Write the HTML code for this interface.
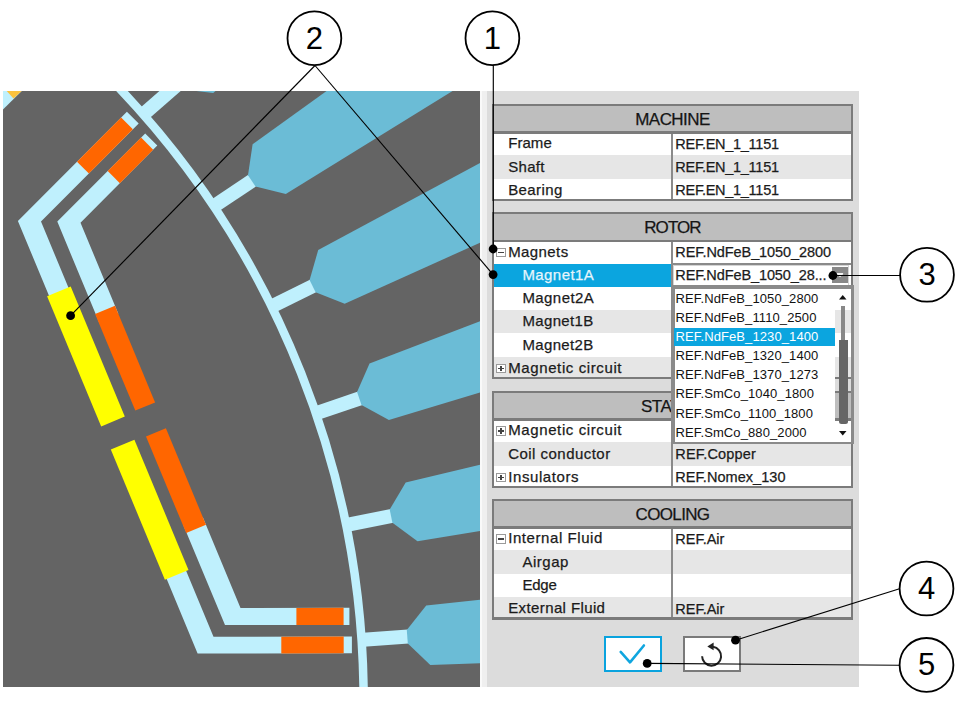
<!DOCTYPE html><html><head><meta charset="utf-8"><style>*{margin:0;padding:0}
html,body{width:966px;height:711px;overflow:hidden;background:#fff;font-family:"Liberation Sans",sans-serif}
svg{position:absolute;left:0;top:0}
.a{position:absolute}
.t{white-space:nowrap;-webkit-text-stroke:0.25px currentColor}
</style></head><body><svg class="motor" width="966" height="711" viewBox="0 0 966 711"><defs><clipPath id="mc"><rect x="3" y="91" width="477" height="596"/></clipPath></defs><g clip-path="url(#mc)"><rect x="3" y="91" width="477" height="596" fill="#646464"/><polygon fill="#bff0fd" points="360.8,748.4 409.2,751.4 408.3,765.4 359.9,762.4"/><polygon fill="#6bbcd6" points="408.2,751.5 430.5,729.8 973.2,743.8 967.2,841.9 426.9,789.5 407.3,765.1"/><polygon fill="#bff0fd" points="359.4,632.9 407.8,629.6 408.8,643.6 360.4,646.9"/><polygon fill="#6bbcd6" points="406.8,629.9 426.2,605.4 966.1,548.9 972.8,647.0 430.3,665.0 407.8,643.4"/><polygon fill="#bff0fd" points="343.1,518.6 390.7,509.0 393.4,522.7 345.9,532.3"/><polygon fill="#6bbcd6" points="389.7,509.4 405.7,482.6 933.8,356.6 953.2,453.0 417.5,541.2 392.4,522.7"/><polygon fill="#bff0fd" points="312.1,407.3 358.0,391.6 362.5,404.9 316.6,420.5"/><polygon fill="#6bbcd6" points="357.1,392.1 369.5,363.5 876.8,170.1 908.5,263.1 388.9,420.1 361.5,405.0"/><polygon fill="#bff0fd" points="266.9,301.0 310.4,279.5 316.6,292.0 273.1,313.5"/><polygon fill="#6bbcd6" points="309.6,280.1 318.2,250.1 796.1,-7.4 839.6,80.7 344.7,303.7 315.6,292.3"/><polygon fill="#bff0fd" points="208.4,201.4 248.7,174.5 256.5,186.1 216.2,213.0"/><polygon fill="#6bbcd6" points="248.0,175.2 252.6,144.3 693.0,-173.0 747.7,-91.3 285.8,194.0 255.5,186.5"/><polygon fill="#bff0fd" points="137.4,110.3 173.9,78.3 183.1,88.9 146.6,120.8"/><polygon fill="#6bbcd6" points="173.3,79.1 173.9,47.9 569.4,-323.8 634.2,-249.8 213.2,92.9 182.2,89.4"/><polygon fill="#bff0fd" points="55.2,29.1 87.2,-7.3 97.7,2.0 65.7,38.4"/><polygon fill="#6bbcd6" points="86.7,-6.4 83.3,-37.4 427.3,-457.3 501.1,-392.4 128.1,2.1 96.9,2.6"/><circle cx="-527.0" cy="701.0" r="890.65" fill="none" stroke="#bff0fd" stroke-width="8.5"/><polygon fill="#bff0fd" points="161.5,566.5 197.6,653.5 351.9,653.3 351.9,636.6 213.5,636.8 181.0,558.4"/><polygon fill="#ffff00" points="164.9,579.7 110.8,449.5 134.4,439.7 188.5,569.9"/><polygon fill="#ff6600" points="281.3,653.4 343.7,653.3 343.7,636.6 281.3,636.7"/><polygon fill="#bff0fd" points="183.3,524.9 225.0,625.1 349.4,625.0 349.4,607.8 240.5,607.9 202.7,516.9"/><polygon fill="#ff6600" points="186.2,533.1 146.0,436.5 165.9,428.2 206.0,524.8"/><polygon fill="#ff6600" points="296.4,625.1 343.6,625.0 343.6,607.8 296.4,607.9"/><polygon fill="#bff0fd" points="54.1,307.9 17.9,221.0 126.9,111.7 138.7,123.5 41.0,221.5 73.5,299.8"/><polygon fill="#ffff00" points="47.1,296.2 101.2,426.4 124.8,416.6 70.7,286.4"/><polygon fill="#ff6600" points="77.0,161.7 121.1,117.5 132.9,129.3 88.9,173.5"/><polygon fill="#bff0fd" points="98.9,321.8 57.3,221.6 145.2,133.5 157.3,145.6 80.5,222.7 118.3,313.7"/><polygon fill="#ff6600" points="95.1,314.0 135.3,410.6 155.1,402.4 115.0,305.8"/><polygon fill="#ff6600" points="107.7,171.0 141.1,137.6 153.2,149.7 119.9,183.2"/><polygon fill="#bff0fd" points="3.0,91.0 21.7,91.0 3.0,109.4"/><polygon fill="#fcc23c" points="6.7,91.0 21.7,91.0 13.5,98.6"/></g></svg><div class="a" style="left:480.00px;top:91.00px;width:2.00px;height:596.00px;background:#f9f9f9;"></div><div class="a" style="left:482.00px;top:91.00px;width:5.00px;height:596.00px;background:#efefef;"></div><div class="a" style="left:487.00px;top:91.00px;width:372.00px;height:596.00px;background:#dcdcdc;"></div><div class="a" style="left:492.00px;top:104.00px;width:361.00px;height:97.30px;background:#7b7b7b;"></div><div class="a" style="left:494.00px;top:106.20px;width:357.00px;height:25.20px;background:#bebebe;"></div><div class="a" style="left:494.00px;top:133.60px;width:357.00px;height:21.40px;background:#ffffff;"></div><div class="a t" style="left:508.20px;top:134.33px;font-size:15.0px;line-height:18.75px;letter-spacing:0.05px;color:#1b1b1b;">Frame</div><div class="a t" style="left:675.30px;top:134.82px;font-size:14.5px;line-height:18.12px;letter-spacing:-0.27px;color:#1b1b1b;">REF.EN_1_1151</div><div class="a" style="left:494.00px;top:155.00px;width:357.00px;height:24.00px;background:#e6e6e6;"></div><div class="a t" style="left:508.20px;top:157.63px;font-size:15.0px;line-height:18.75px;letter-spacing:0.31px;color:#1b1b1b;">Shaft</div><div class="a t" style="left:675.30px;top:158.12px;font-size:14.5px;line-height:18.12px;letter-spacing:-0.27px;color:#1b1b1b;">REF.EN_1_1151</div><div class="a" style="left:494.00px;top:179.00px;width:357.00px;height:20.00px;background:#ffffff;"></div><div class="a t" style="left:508.20px;top:180.93px;font-size:15.0px;line-height:18.75px;letter-spacing:0.40px;color:#1b1b1b;">Bearing</div><div class="a t" style="left:675.30px;top:181.42px;font-size:14.5px;line-height:18.12px;letter-spacing:-0.27px;color:#1b1b1b;">REF.EN_1_1151</div><div class="a t" style="left:572.50px;width:200px;text-align:center;top:109.28px;font-size:17.0px;line-height:21.25px;letter-spacing:-0.56px;color:#151515">MACHINE</div><div class="a" style="left:671.00px;top:133.60px;width:1.60px;height:65.40px;background:#8a8a8a;"></div><div class="a" style="left:492.00px;top:212.20px;width:361.00px;height:167.20px;background:#7b7b7b;"></div><div class="a" style="left:494.00px;top:214.40px;width:357.00px;height:25.20px;background:#bebebe;"></div><div class="a" style="left:494.00px;top:241.80px;width:357.00px;height:22.20px;background:#ffffff;"></div><div class="a t" style="left:508.20px;top:242.53px;font-size:15.0px;line-height:18.75px;letter-spacing:0.41px;color:#1b1b1b;">Magnets</div><div class="a" style="left:496.40px;top:247.60px;width:9.30px;height:9.30px;background:#fff;border:1px solid #9a9a9a;box-sizing:border-box"></div><div class="a" style="left:498.40px;top:251.60px;width:5.30px;height:1.30px;background:#444;"></div><div class="a t" style="left:675.30px;top:243.02px;font-size:14.5px;line-height:18.12px;letter-spacing:-0.08px;color:#1b1b1b;">REF.NdFeB_1050_2800</div><div class="a" style="left:494.00px;top:264.00px;width:357.00px;height:23.00px;background:#0ba5df;"></div><div class="a t" style="left:522.40px;top:265.83px;font-size:15.0px;line-height:18.75px;letter-spacing:0.43px;color:#e6f5fc;">Magnet1A</div><div class="a" style="left:494.00px;top:287.00px;width:357.00px;height:23.00px;background:#ffffff;"></div><div class="a t" style="left:522.40px;top:289.13px;font-size:15.0px;line-height:18.75px;letter-spacing:0.43px;color:#1b1b1b;">Magnet2A</div><div class="a" style="left:494.00px;top:310.00px;width:357.00px;height:23.00px;background:#e6e6e6;"></div><div class="a t" style="left:522.40px;top:312.43px;font-size:15.0px;line-height:18.75px;letter-spacing:0.36px;color:#1b1b1b;">Magnet1B</div><div class="a" style="left:494.00px;top:333.00px;width:357.00px;height:24.00px;background:#ffffff;"></div><div class="a t" style="left:522.40px;top:335.73px;font-size:15.0px;line-height:18.75px;letter-spacing:0.36px;color:#1b1b1b;">Magnet2B</div><div class="a" style="left:494.00px;top:357.00px;width:357.00px;height:20.10px;background:#e6e6e6;"></div><div class="a t" style="left:508.20px;top:359.03px;font-size:15.0px;line-height:18.75px;letter-spacing:0.61px;color:#1b1b1b;">Magnetic circuit</div><div class="a" style="left:496.40px;top:364.10px;width:9.30px;height:9.30px;background:#fff;border:1px solid #9a9a9a;box-sizing:border-box"></div><div class="a" style="left:498.40px;top:368.10px;width:5.30px;height:1.30px;background:#444;"></div><div class="a" style="left:500.40px;top:366.10px;width:1.30px;height:5.30px;background:#444;"></div><div class="a t" style="left:572.50px;width:200px;text-align:center;top:217.48px;font-size:17.0px;line-height:21.25px;letter-spacing:-0.92px;color:#151515">ROTOR</div><div class="a" style="left:671.00px;top:241.80px;width:1.60px;height:135.30px;background:#8a8a8a;"></div><div class="a" style="left:492.00px;top:391.00px;width:361.00px;height:97.30px;background:#7b7b7b;"></div><div class="a" style="left:494.00px;top:393.20px;width:357.00px;height:25.20px;background:#bebebe;"></div><div class="a" style="left:494.00px;top:420.60px;width:357.00px;height:21.40px;background:#ffffff;"></div><div class="a t" style="left:508.20px;top:421.33px;font-size:15.0px;line-height:18.75px;letter-spacing:0.61px;color:#1b1b1b;">Magnetic circuit</div><div class="a" style="left:496.40px;top:426.40px;width:9.30px;height:9.30px;background:#fff;border:1px solid #9a9a9a;box-sizing:border-box"></div><div class="a" style="left:498.40px;top:430.40px;width:5.30px;height:1.30px;background:#444;"></div><div class="a" style="left:500.40px;top:428.40px;width:1.30px;height:5.30px;background:#444;"></div><div class="a" style="left:494.00px;top:442.00px;width:357.00px;height:24.00px;background:#e6e6e6;"></div><div class="a t" style="left:508.20px;top:444.63px;font-size:15.0px;line-height:18.75px;letter-spacing:0.47px;color:#1b1b1b;">Coil conductor</div><div class="a t" style="left:675.30px;top:445.12px;font-size:14.5px;line-height:18.12px;letter-spacing:0.18px;color:#1b1b1b;">REF.Copper</div><div class="a" style="left:494.00px;top:466.00px;width:357.00px;height:20.00px;background:#ffffff;"></div><div class="a t" style="left:508.20px;top:467.93px;font-size:15.0px;line-height:18.75px;letter-spacing:0.59px;color:#1b1b1b;">Insulators</div><div class="a" style="left:496.40px;top:473.00px;width:9.30px;height:9.30px;background:#fff;border:1px solid #9a9a9a;box-sizing:border-box"></div><div class="a" style="left:498.40px;top:477.00px;width:5.30px;height:1.30px;background:#444;"></div><div class="a" style="left:500.40px;top:475.00px;width:1.30px;height:5.30px;background:#444;"></div><div class="a t" style="left:675.30px;top:468.42px;font-size:14.5px;line-height:18.12px;letter-spacing:0.05px;color:#1b1b1b;">REF.Nomex_130</div><div class="a t" style="left:572.50px;width:200px;text-align:center;top:396.28px;font-size:17.0px;line-height:21.25px;letter-spacing:-0.49px;color:#151515">STATOR</div><div class="a" style="left:671.00px;top:420.60px;width:1.60px;height:65.40px;background:#8a8a8a;"></div><div class="a" style="left:492.00px;top:499.00px;width:361.00px;height:120.60px;background:#7b7b7b;"></div><div class="a" style="left:494.00px;top:501.20px;width:357.00px;height:25.20px;background:#bebebe;"></div><div class="a" style="left:494.00px;top:528.60px;width:357.00px;height:21.40px;background:#ffffff;"></div><div class="a t" style="left:508.20px;top:529.33px;font-size:15.0px;line-height:18.75px;letter-spacing:0.57px;color:#1b1b1b;">Internal Fluid</div><div class="a" style="left:496.40px;top:534.40px;width:9.30px;height:9.30px;background:#fff;border:1px solid #9a9a9a;box-sizing:border-box"></div><div class="a" style="left:498.40px;top:538.40px;width:5.30px;height:1.30px;background:#444;"></div><div class="a t" style="left:675.30px;top:529.82px;font-size:14.5px;line-height:18.12px;letter-spacing:-0.01px;color:#1b1b1b;">REF.Air</div><div class="a" style="left:494.00px;top:550.00px;width:357.00px;height:24.00px;background:#e6e6e6;"></div><div class="a t" style="left:522.40px;top:552.63px;font-size:15.0px;line-height:18.75px;letter-spacing:0.54px;color:#1b1b1b;">Airgap</div><div class="a" style="left:494.00px;top:574.00px;width:357.00px;height:23.00px;background:#ffffff;"></div><div class="a t" style="left:522.40px;top:575.93px;font-size:15.0px;line-height:18.75px;letter-spacing:-0.21px;color:#1b1b1b;">Edge</div><div class="a" style="left:494.00px;top:597.00px;width:357.00px;height:20.30px;background:#e6e6e6;"></div><div class="a t" style="left:508.20px;top:599.23px;font-size:15.0px;line-height:18.75px;letter-spacing:0.39px;color:#1b1b1b;">External Fluid</div><div class="a t" style="left:675.30px;top:599.72px;font-size:14.5px;line-height:18.12px;letter-spacing:-0.01px;color:#1b1b1b;">REF.Air</div><div class="a t" style="left:572.50px;width:200px;text-align:center;top:504.28px;font-size:17.0px;line-height:21.25px;letter-spacing:-0.64px;color:#151515">COOLING</div><div class="a" style="left:671.00px;top:528.60px;width:1.60px;height:88.70px;background:#8a8a8a;"></div><div class="a" style="left:672.70px;top:262.20px;width:178.50px;height:24.20px;background:#ffffff;"></div><div class="a" style="left:672.70px;top:263.10px;width:176.80px;height:21.50px;background:#d4d4d4;"></div><div class="a" style="left:674.30px;top:265.90px;width:173.80px;height:18.70px;background:#ffffff;"></div><div class="a" style="left:672.70px;top:263.10px;width:178.50px;height:1.90px;background:#8a8a8a;"></div><div class="a t" style="left:675.30px;top:266.42px;font-size:14.5px;line-height:18.12px;letter-spacing:-0.10px;color:#1b1b1b;">REF.NdFeB_1050_28...</div><div class="a" style="left:832.10px;top:267.00px;width:16.00px;height:15.80px;background:#888888;"></div><div class="a" style="left:674.60px;top:288.50px;width:160.20px;height:153.20px;background:#ffffff;"></div><div class="a" style="left:671.30px;top:285.30px;width:182.70px;height:3.50px;background:#8a8a8a;"></div><div class="a" style="left:671.30px;top:441.60px;width:182.70px;height:2.30px;background:#8a8a8a;"></div><div class="a" style="left:671.30px;top:285.30px;width:3.30px;height:158.60px;background:#8a8a8a;"></div><div class="a" style="left:851.00px;top:285.30px;width:3.00px;height:158.60px;background:#8a8a8a;"></div><div class="a" style="left:674.30px;top:327.80px;width:160.50px;height:18.40px;background:#0ba5df;"></div><div class="a t" style="left:675.60px;top:290.77px;font-size:13.0px;line-height:16.25px;letter-spacing:0.10px;color:#111111;-webkit-text-stroke:0">REF.NdFeB_1050_2800</div><div class="a t" style="left:675.60px;top:309.90px;font-size:13.0px;line-height:16.25px;letter-spacing:0.10px;color:#111111;-webkit-text-stroke:0">REF.NdFeB_1110_2500</div><div class="a t" style="left:675.60px;top:329.03px;font-size:13.0px;line-height:16.25px;letter-spacing:0.10px;color:#ffffff;-webkit-text-stroke:0">REF.NdFeB_1230_1400</div><div class="a t" style="left:675.60px;top:348.16px;font-size:13.0px;line-height:16.25px;letter-spacing:0.10px;color:#111111;-webkit-text-stroke:0">REF.NdFeB_1320_1400</div><div class="a t" style="left:675.60px;top:367.29px;font-size:13.0px;line-height:16.25px;letter-spacing:0.10px;color:#111111;-webkit-text-stroke:0">REF.NdFeB_1370_1273</div><div class="a t" style="left:675.60px;top:386.42px;font-size:13.0px;line-height:16.25px;letter-spacing:0.10px;color:#111111;-webkit-text-stroke:0">REF.SmCo_1040_1800</div><div class="a t" style="left:675.60px;top:405.55px;font-size:13.0px;line-height:16.25px;letter-spacing:0.10px;color:#111111;-webkit-text-stroke:0">REF.SmCo_1100_1800</div><div class="a t" style="left:675.60px;top:424.68px;font-size:13.0px;line-height:16.25px;letter-spacing:0.10px;color:#111111;-webkit-text-stroke:0">REF.SmCo_880_2000</div><div class="a" style="left:841.20px;top:305.70px;width:4.20px;height:34.50px;background:#888888;"></div><div class="a" style="left:838.90px;top:339.70px;width:8.80px;height:84.60px;background:#666666;border-radius:0 0 2.5px 2.5px"></div><div class="a" style="left:603.50px;top:636.10px;width:58.60px;height:35.90px;background:#ffffff;border:2px solid #0aa3de;box-sizing:border-box"></div><div class="a" style="left:682.80px;top:636.10px;width:58.30px;height:35.90px;background:#ffffff;border:2px solid #7a7a7a;box-sizing:border-box"></div><svg width="966" height="711" viewBox="0 0 966 711" style="position:absolute;left:0;top:0"><polygon points="836.9,272.9 843.1,272.9 843.1,274.2 840,277.2 836.9,274.2" fill="#f4f4f4"/><polygon points="839,299.6 846.5,299.6 842.75,295" fill="#111"/><polygon points="839,431 846.5,431 842.75,435.5" fill="#111"/><polyline points="620.7,651.9 630,662.3 643.9,645.5" fill="none" stroke="#10a6df" stroke-width="2.6" stroke-linecap="round" stroke-linejoin="round"/><path d="M 702.1,656.3 A 9.5,9.5 0 1 0 713,646.8" fill="none" stroke="#222" stroke-width="2"/><polygon points="707.3,646.6 713.6,642.6 713.6,650.2" fill="#222"/><line x1="315.0" y1="65.5" x2="70.6" y2="315.7" stroke="#000" stroke-width="1.15"/><line x1="315.0" y1="65.5" x2="493.1" y2="274.6" stroke="#000" stroke-width="1.15"/><line x1="493.3" y1="65.0" x2="493.3" y2="249.0" stroke="#000" stroke-width="1.15"/><line x1="832.9" y1="275.5" x2="900.0" y2="275.5" stroke="#000" stroke-width="1.15"/><line x1="735.5" y1="640.2" x2="899.5" y2="588.7" stroke="#000" stroke-width="1.15"/><line x1="647.2" y1="663.4" x2="899.5" y2="665.2" stroke="#000" stroke-width="1.15"/><circle cx="70.6" cy="315.7" r="4.4" fill="#000"/><circle cx="493.1" cy="274.6" r="4.4" fill="#000"/><circle cx="493.1" cy="249.0" r="4.4" fill="#000"/><circle cx="832.9" cy="275.5" r="4.4" fill="#000"/><circle cx="735.5" cy="640.2" r="4.4" fill="#000"/><circle cx="647.2" cy="663.4" r="4.4" fill="#000"/><circle cx="314.4" cy="38.2" r="26.9" fill="#fff" stroke="#000" stroke-width="1.8"/><text x="314.4" y="49.3" font-size="31" text-anchor="middle" fill="#000" font-family="Liberation Sans">2</text><circle cx="492.4" cy="38.2" r="26.9" fill="#fff" stroke="#000" stroke-width="1.8"/><text x="492.4" y="49.3" font-size="31" text-anchor="middle" fill="#000" font-family="Liberation Sans">1</text><circle cx="927.0" cy="274.8" r="26.9" fill="#fff" stroke="#000" stroke-width="1.8"/><text x="927.0" y="284.9" font-size="31" text-anchor="middle" fill="#000" font-family="Liberation Sans">3</text><circle cx="926.5" cy="588.5" r="26.9" fill="#fff" stroke="#000" stroke-width="1.8"/><text x="926.5" y="598.8" font-size="31" text-anchor="middle" fill="#000" font-family="Liberation Sans">4</text><circle cx="926.5" cy="664.9" r="26.9" fill="#fff" stroke="#000" stroke-width="1.8"/><text x="926.5" y="675.0" font-size="31" text-anchor="middle" fill="#000" font-family="Liberation Sans">5</text></svg></body></html>
